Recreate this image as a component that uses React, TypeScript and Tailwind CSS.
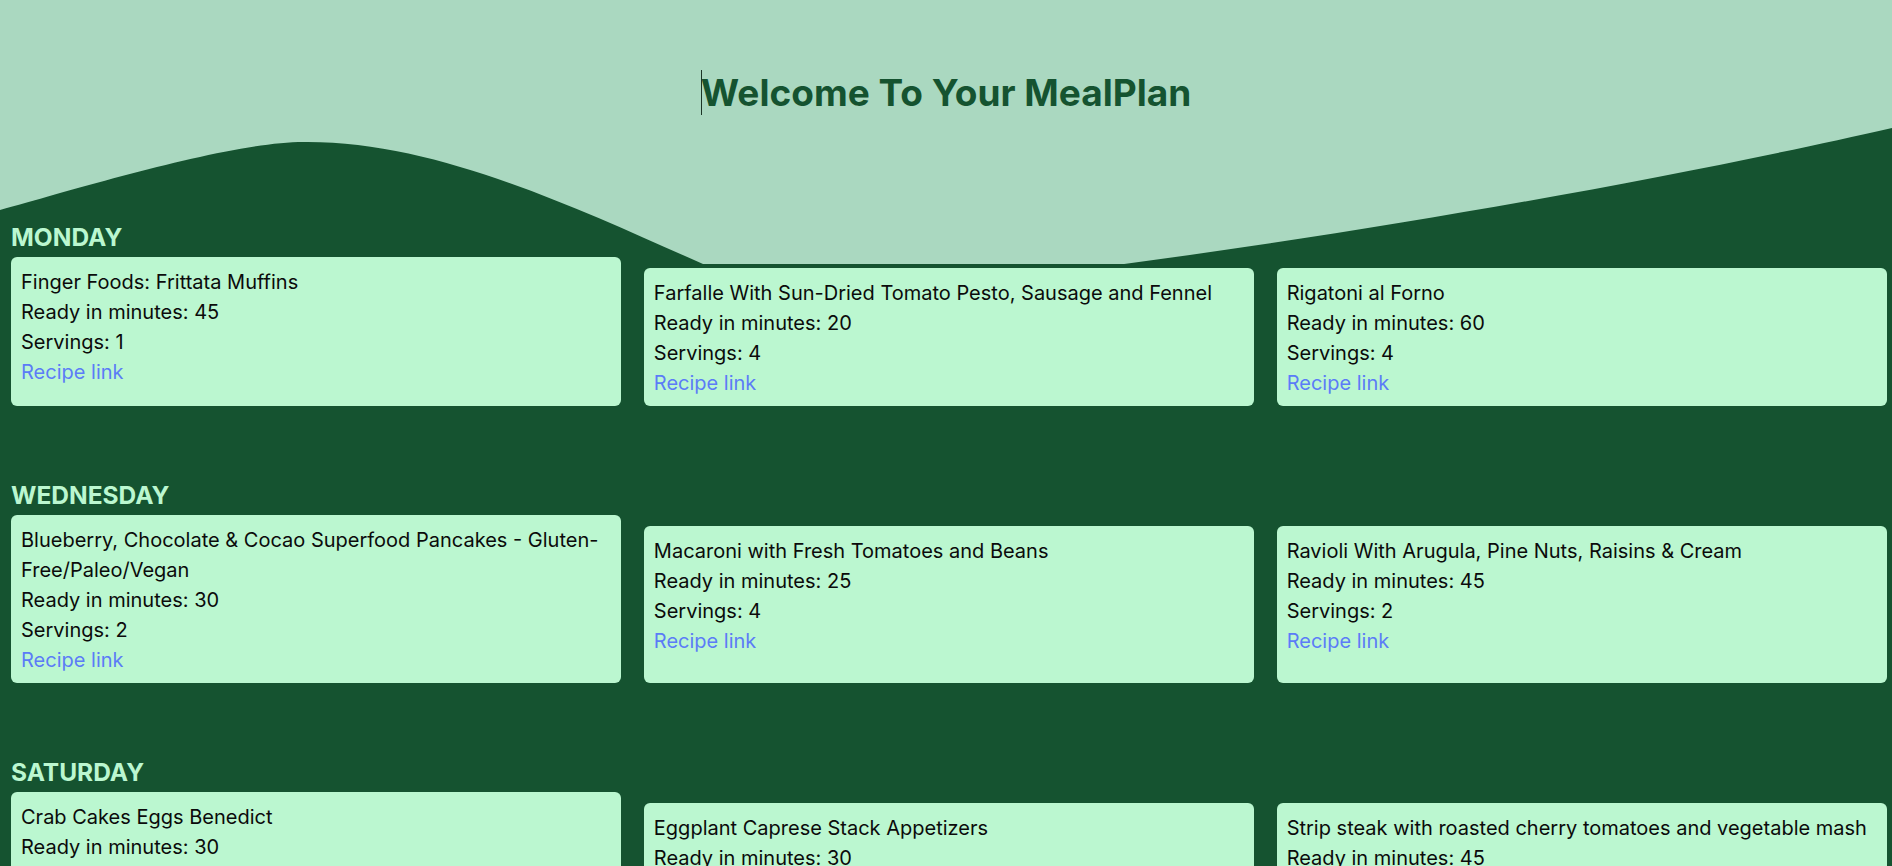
import React from "react";

type Meal = { title: string; minutes: number; servings: number };
type Day = { name: string; meals: Meal[] };

const days: Day[] = [
  {
    name: "MONDAY",
    meals: [
      { title: "Finger Foods: Frittata Muffins", minutes: 45, servings: 1 },
      { title: "Farfalle With Sun-Dried Tomato Pesto, Sausage and Fennel", minutes: 20, servings: 4 },
      { title: "Rigatoni al Forno", minutes: 60, servings: 4 },
    ],
  },
  {
    name: "WEDNESDAY",
    meals: [
      { title: "Blueberry, Chocolate & Cocao Superfood Pancakes - Gluten-Free/Paleo/Vegan", minutes: 30, servings: 2 },
      { title: "Macaroni with Fresh Tomatoes and Beans", minutes: 25, servings: 4 },
      { title: "Ravioli With Arugula, Pine Nuts, Raisins & Cream", minutes: 45, servings: 2 },
    ],
  },
  {
    name: "SATURDAY",
    meals: [
      { title: "Crab Cakes Eggs Benedict", minutes: 30, servings: 2 },
      { title: "Eggplant Caprese Stack Appetizers", minutes: 30, servings: 4 },
      { title: "Strip steak with roasted cherry tomatoes and vegetable mash", minutes: 45, servings: 2 },
    ],
  },
];

function Card({ meal, first }: { meal: Meal; first: boolean }) {
  return (
    <div
      className={
        "rounded-[6px] bg-[#bbf7d0] px-[10px] pt-[10px] pb-[8px] text-[20px] leading-[30px] text-[#0b0b0b] " +
        (first ? "" : "mt-[11px]")
      }
    >
      <p>{meal.title}</p>
      <p>Ready in minutes: {meal.minutes}</p>
      <p>Servings: {meal.servings}</p>
      <a href="#" className="text-[#5b7cf7]">
        Recipe link
      </a>
    </div>
  );
}

export default function App() {
  return (
    <div
      className="relative min-h-screen overflow-hidden bg-[#155330]"
      style={{ fontFamily: "Inter, 'Noto Sans', sans-serif" }}
    >
      <svg
        className="absolute left-0 top-0 h-[264px] w-full"
        viewBox="0 0 1892 264"
        preserveAspectRatio="none"
      >
        <path
          fill="#aad8c0"
          d="M0,0 L1892,0 L1892,128 C1700,172 1400,228 1109,266 L1100,320 L760,320 L703,264 C583,211 440,142 308,142 C236,140 80,188 0,210 Z"
        />
      </svg>

      <header className="relative pt-[70px] text-center">
        <h1 className="text-[37px] font-bold leading-[45px] text-[#155330]">
          <span className="relative inline-block">
            <span className="absolute left-0 top-0 h-[45px] w-px bg-[#1c3526]" />
            Welcome To Your MealPlan
          </span>
        </h1>
      </header>

      <main className="relative mt-[108px] pl-[11px] pr-[5px]">
        {days.map((day, i) => (
          <section key={day.name} className={i === 0 ? "" : "mt-[75px]"}>
            <h2 className="mb-[5px] text-[24.5px] font-bold leading-[29px] text-[#bbf7d0]">
              {day.name}
            </h2>
            <div className="grid grid-cols-3 gap-x-[22.5px]">
              {day.meals.map((m, j) => (
                <Card key={m.title} meal={m} first={j === 0} />
              ))}
            </div>
          </section>
        ))}
      </main>
    </div>
  );
}
